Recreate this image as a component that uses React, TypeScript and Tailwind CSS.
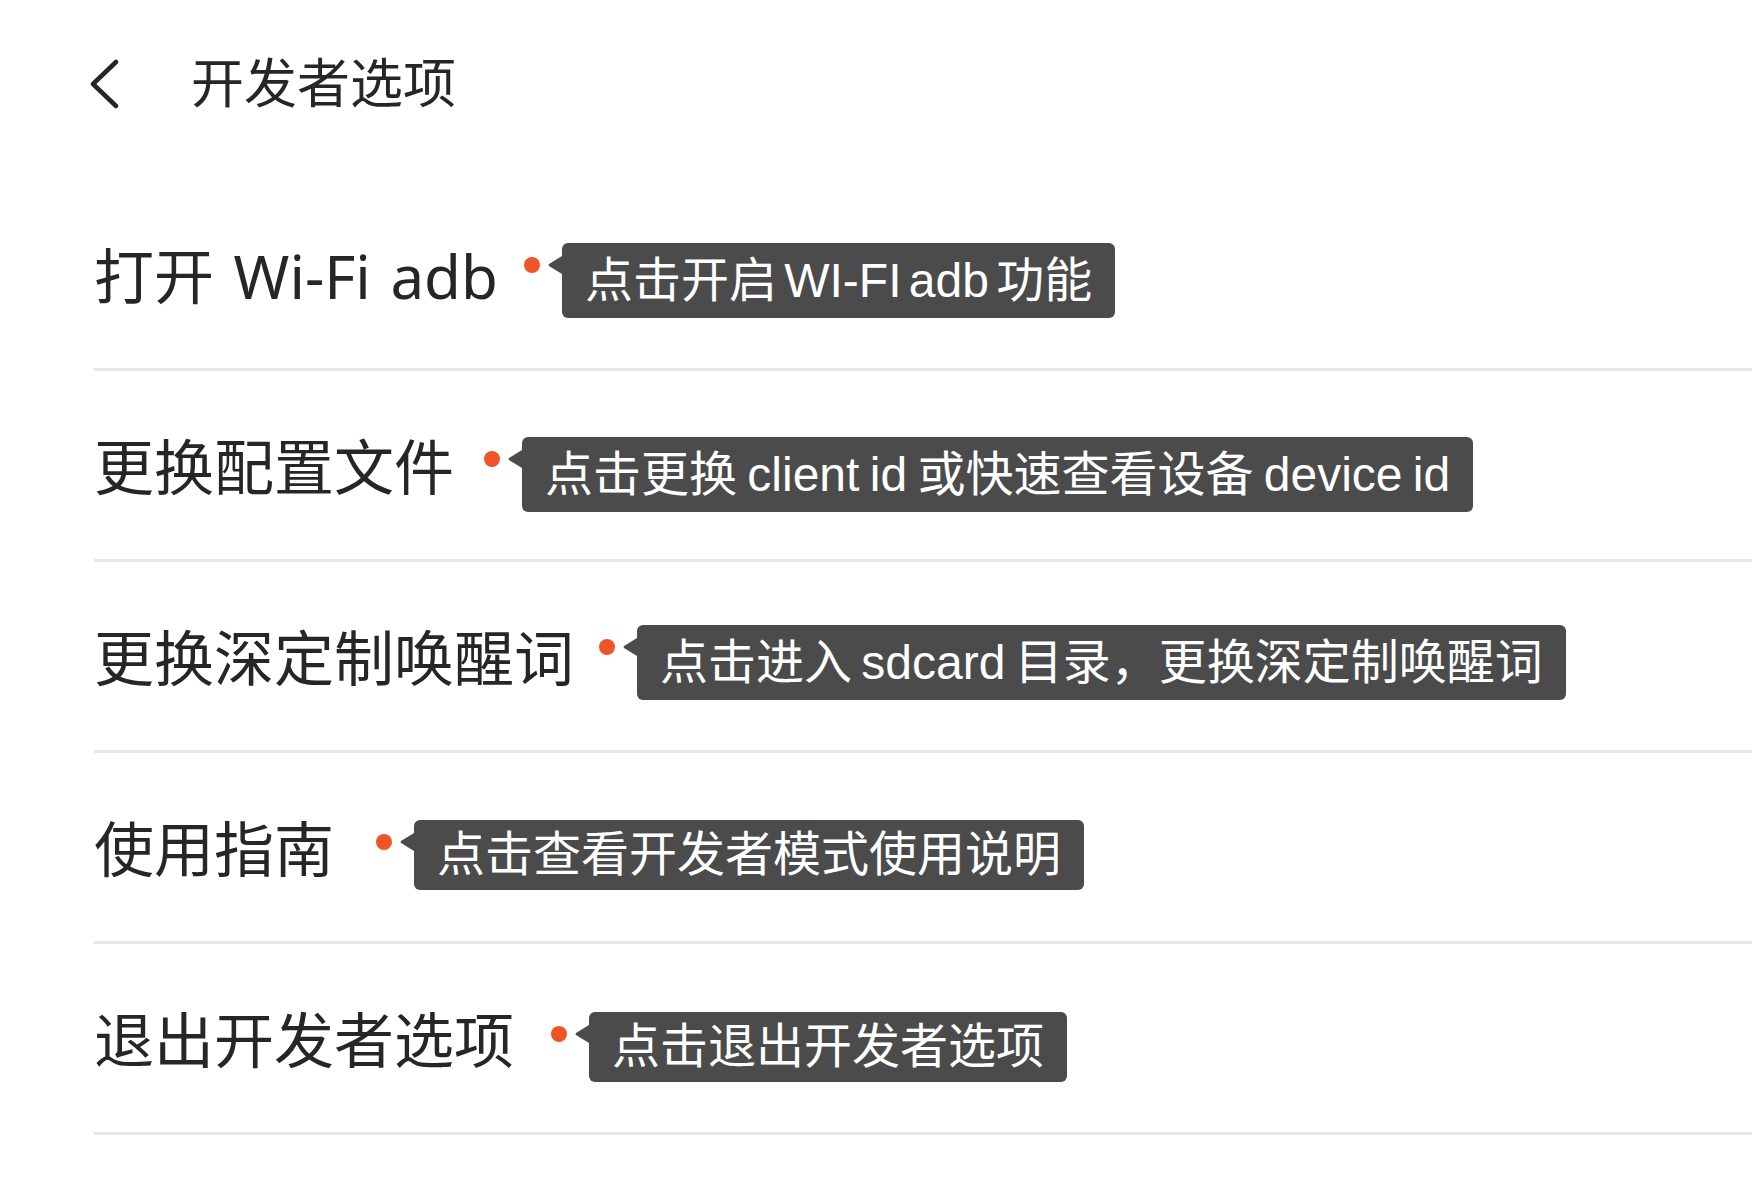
import React from "react";

type Row = {
  label: string;
  tip: string;
  ml: number;
  boxTop: number;
  boxH: number;
  labelWs?: number;
  tipWs: number;
};

const rows: Row[] = [
  { label: "打开 Wi-Fi adb", tip: "点击开启 WI-FI adb 功能", ml: 26, boxTop: 63, boxH: 75, labelWs: 4, tipWs: -6 },
  { label: "更换配置文件", tip: "点击更换 client id 或快速查看设备 device id", ml: 30, boxTop: 66, boxH: 75, tipWs: -3 },
  { label: "更换深定制唤醒词", tip: "点击进入 sdcard 目录，更换深定制唤醒词", ml: 25, boxTop: 63, boxH: 75, tipWs: -4 },
  { label: "使用指南", tip: "点击查看开发者模式使用说明", ml: 42, boxTop: 67, boxH: 70, tipWs: 0 },
  { label: "退出开发者选项", tip: "点击退出开发者选项", ml: 37, boxTop: 68, boxH: 70, tipWs: 0 },
];

const labelFont = { fontFamily: '"Noto Sans", "Noto Sans CJK SC", sans-serif' };
const tipFont = { fontFamily: '"Liberation Sans", "Noto Sans CJK SC", sans-serif' };

function Tip({ row }: { row: Row }) {
  return (
    <div className="flex items-start" style={{ marginLeft: row.ml, marginTop: row.boxTop }}>
      <span className="mt-[14px] h-4 w-4 shrink-0 rounded-full bg-[#ef5328]" />
      <svg className="ml-2 mt-[13px] shrink-0" width="14" height="18" viewBox="0 0 14 18">
        <path d="M14 0 L1 8 Q0 9 1 10 L14 18 Z" fill="#4b4b4b" />
      </svg>
      <div
        className="flex items-center whitespace-nowrap rounded-md bg-[#4b4b4b] px-[23px] text-[48px] leading-[56px] text-white"
        style={{ ...tipFont, wordSpacing: `${row.tipWs}px`, height: row.boxH }}
      >
        {row.tip}
      </div>
    </div>
  );
}

export default function App() {
  return (
    <div className="h-[1192px] w-[1752px] overflow-hidden bg-white text-[#262626]">
      <div className="flex h-[180px] items-start pl-[90px]">
        <svg className="mt-[59px] shrink-0" width="30" height="50" viewBox="0 0 30 50">
          <polyline
            points="26,3 3,25 26,47"
            fill="none"
            stroke="#262626"
            strokeWidth="4.5"
            strokeLinecap="round"
            strokeLinejoin="round"
          />
        </svg>
        <span className="ml-[71px] mt-[56px] text-[53px] leading-[53px]" style={labelFont}>
          开发者选项
        </span>
      </div>
      {rows.map((row) => (
        <div key={row.label}>
          <div className="flex h-[188px] items-start pl-[94px]">
            <span
              className="mt-[66px] whitespace-nowrap text-[60px] leading-[60px]"
              style={{ ...labelFont, wordSpacing: row.labelWs ? `${row.labelWs}px` : undefined }}
            >
              {row.label}
            </span>
            <Tip row={row} />
          </div>
          <div className="ml-[94px] h-[3px] bg-[#e6e6e6]" />
        </div>
      ))}
    </div>
  );
}
